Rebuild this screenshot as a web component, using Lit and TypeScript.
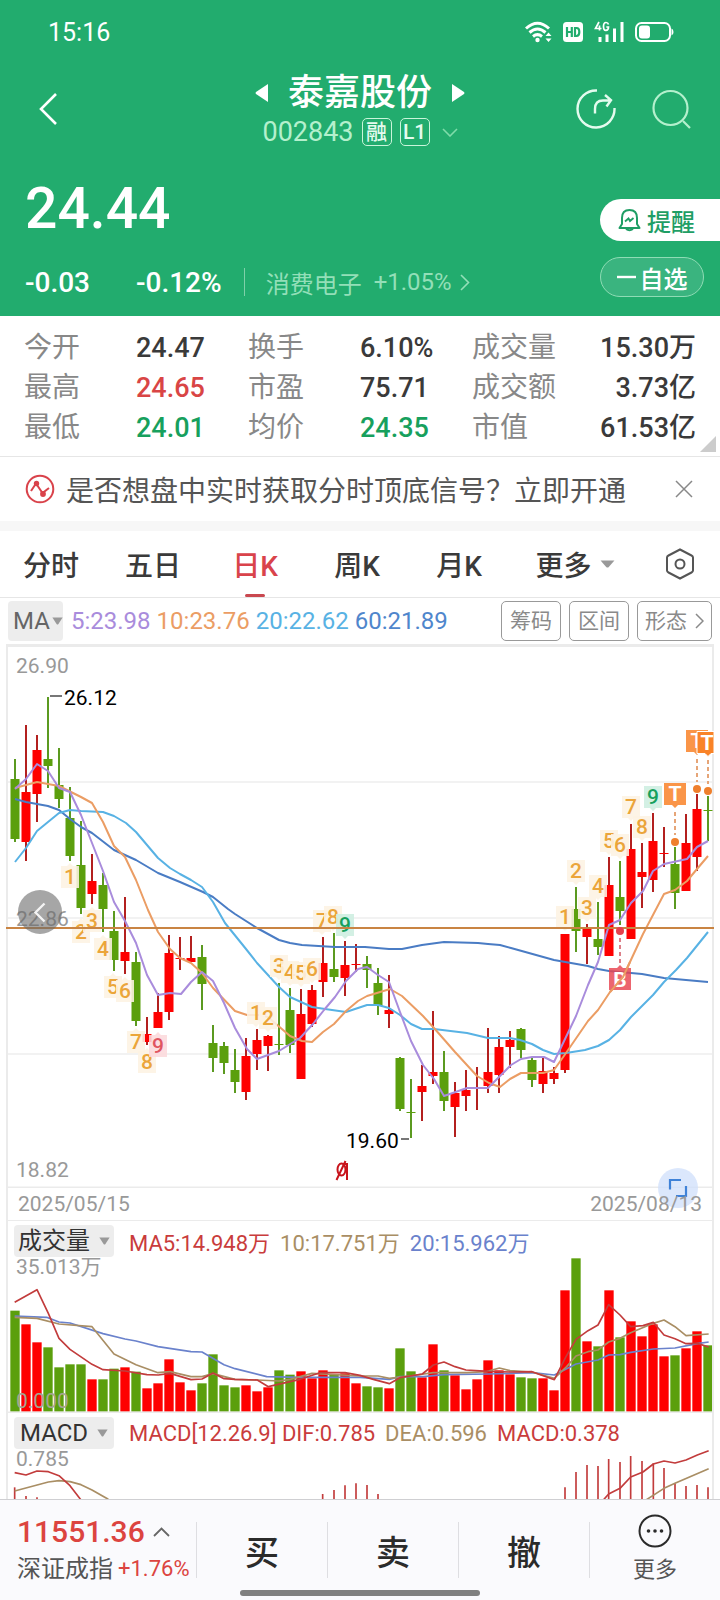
import { LitElement, html, css, svg } from "lit";
import { customElement } from "lit/decorators.js";

type Candle = [string, number, number, number, number];

// direction, wick top, wick bottom, body top, body bottom
const CANDLES: Candle[] = [
  ["g", 759, 842, 779, 839], ["r", 725, 861, 792, 842], ["r", 735, 822, 750, 794], ["g", 697, 788, 759, 766],
  ["g", 748, 808, 785, 799], ["g", 787, 861, 818, 856], ["g", 821, 914, 865, 908], ["r", 854, 904, 881, 894],
  ["g", 873, 932, 885, 909], ["g", 911, 971, 931, 960], ["r", 897, 974, 952, 961], ["g", 952, 1026, 962, 1021],
  ["r", 1017, 1045, 1034, 1042], ["r", 993, 1028, 1012, 1028], ["r", 935, 1020, 953, 1012], ["r", 937, 970, 958, 959],
  ["r", 936, 962, 958, 962], ["g", 945, 1010, 957, 984], ["g", 1025, 1072, 1043, 1058], ["g", 1042, 1074, 1046, 1063],
  ["g", 1049, 1093, 1070, 1082], ["r", 1038, 1100, 1056, 1092], ["r", 1029, 1070, 1040, 1054], ["r", 1035, 1071, 1036, 1046],
  ["g", 983, 1055, 1044, 1045], ["g", 988, 1053, 1010, 1045], ["r", 989, 1079, 1014, 1079], ["r", 985, 1027, 990, 1024],
  ["r", 937, 997, 963, 982], ["g", 933, 982, 969, 977], ["r", 941, 996, 965, 978], ["r", 944, 972, 964, 965],
  ["g", 956, 988, 964, 970], ["g", 968, 1015, 983, 1006], ["r", 975, 1028, 1010, 1014], ["g", 1057, 1111, 1058, 1109],
  ["g", 1079, 1138, 1112, 1113], ["r", 1065, 1121, 1086, 1092], ["r", 1011, 1084, 1072, 1076], ["g", 1051, 1111, 1072, 1101],
  ["r", 1082, 1137, 1093, 1107], ["r", 1070, 1111, 1090, 1096], ["r", 1067, 1110, 1088, 1089], ["r", 1028, 1093, 1072, 1086],
  ["r", 1036, 1093, 1047, 1075], ["r", 1031, 1068, 1040, 1047], ["g", 1028, 1058, 1029, 1050], ["g", 1058, 1087, 1060, 1080],
  ["r", 1057, 1093, 1071, 1084], ["r", 1067, 1084, 1073, 1079], ["r", 934, 1073, 934, 1070], ["g", 887, 952, 909, 931],
  ["r", 924, 964, 929, 937], ["g", 902, 955, 939, 947], ["r", 857, 956, 885, 956], ["g", 861, 925, 897, 911],
  ["r", 824, 939, 849, 939], ["r", 843, 908, 872, 877], ["r", 813, 892, 841, 880], ["r", 827, 867, 853, 854],
  ["g", 847, 909, 864, 893], ["r", 814, 891, 843, 891], ["r", 794, 871, 809, 857], ["g", 796, 841, 810, 811],
];

const MA5 = "15,789 26,779 37,764 48,771 59,788 70,792 81,815 92,843 103,871 114,902 125,921 136,943 147,975 158,995 170,993 181,994 191,982 202,972 213,981 224,1003 235,1028 247,1049 257,1059 279,1051 300,1038 313,1024 324,1010 335,997 346,981 358,969 367,967 378,975 389,982 400,1012 411,1041 423,1065 434,1079 444,1096 467,1088 488,1088 500,1076 511,1065 521,1059 532,1057 544,1057 554,1062 566,1037 576,1016 588,985 598,962 609,925 620,920 631,903 643,891 653,871 664,864 687,859 697,847 708,841";
const MA10 = "15,788 26,785 37,782 59,786 81,797 92,803 103,822 114,846 125,857 136,880 148,910 158,932 170,949 180,958 191,963 202,973 213,988 235,1011 247,1015 258,1015 268,1017 290,1036 302,1041 312,1042 323,1032 334,1024 346,1011 358,1001 367,996 390,989 402,996 423,1016 434,1028 455,1052 477,1076 489,1083 500,1087 510,1079 521,1073 543,1073 554,1070 566,1053 588,1021 598,1010 610,992 623,977 643,934 664,894 675,890 687,881 697,869 708,856";
const MA20 = "15,862 26,848 37,831 59,813 70,810 81,811 103,812 114,816 126,823 136,832 158,858 170,868 180,874 191,880 202,887 213,902 225,923 246,949 257,963 279,987 290,997 312,1007 325,1009 346,1012 358,1008 367,1005 378,1005 389,1008 400,1015 411,1024 422,1029 434,1029 467,1033 488,1038 510,1038 520,1040 532,1044 543,1050 554,1054 566,1053 585,1050 598,1046 609,1040 620,1030 631,1017 653,995 664,982 676,970 687,958 708,932";
const MA60 = "15,799 26,802 48,806 59,810 70,819 81,827 92,833 114,850 136,860 158,873 180,882 203,892 213,897 228,909 235,914 257,928 279,940 290,943 302,945 335,947 365,947 389,949 402,949 422,945 444,942 478,943 488,944 500,945 511,948 554,960 588,966 598,969 609,971 642,974 664,978 708,982";

// sequence digit, centre x, centre y, kind (u: box below a bar, d: box above a bar)
const COUNTS: [string, number, number, string][] = [
  ["1", 70, 877, "u"], ["2", 81, 932, "u"], ["3", 92, 921, "u"], ["4", 103, 949, "u"], ["5", 113, 987, "u"],
  ["6", 125, 991, "u"], ["7", 136, 1042, "u"], ["8", 147, 1062, "u"], ["9", 158, 1046, "red u"],
  ["1", 256, 1013, "d"], ["2", 268, 1018, "d"], ["3", 279, 966, "d"], ["4", 290, 972, "d"], ["5", 301, 973, "d"],
  ["6", 312, 969, "d"], ["7", 322, 921, "d"], ["8", 333, 917, "d"], ["9", 345, 925, "green d"],
  ["1", 565, 917, "d"], ["2", 576, 871, "d"], ["3", 587, 908, "d"], ["4", 598, 886, "d"], ["5", 609, 841, "d"],
  ["6", 620, 845, "d"], ["7", 631, 807, "d"], ["8", 642, 827, "d"], ["9", 653, 797, "green d"],
];

// top of each volume bar, on the panel's threefold scale with its base at 725
const VOLUMES = [
  422, 463, 517, 532, 592, 583, 583, 628, 628, 596, 592, 605, 655, 640, 568, 637, 661, 640, 553, 646, 652, 646,
  664, 652, 601, 614, 604, 625, 601, 613, 610, 640, 649, 652, 655, 535, 604, 622, 523, 601, 616, 658, 628, 571,
  601, 613, 622, 625, 625, 661, 361, 265, 514, 529, 361, 502, 454, 499, 463, 559, 556, 535, 484, 526,
];
const VOL5 = "44,397 111,359 145,430 177,505 210,538 276,583 309,599 375,603 441,614 475,615 510,610 573,629 606,627 639,609 672,626 705,628 772,630 805,650 900,628 960,608 1035,608 1080,616 1120,628 1168,641 1200,623 1267,612 1300,585 1332,576 1365,590 1398,600 1467,604 1532,606 1596,605 1663,629 1698,560 1728,508 1764,482 1794,465 1826,404 1860,435 1892,470 1929,467 1960,457 1992,495 2025,506 2058,521 2092,520 2126,531";
const VOL10 = "44,442 111,445 177,462 276,470 342,552 408,584 474,608 510,605 573,620 606,620 639,611 705,628 772,630 837,633 870,628 936,610 1080,618 1134,618 1168,625 1230,618 1300,608 1400,608 1460,605 1498,594 1530,602 1596,606 1663,625 1700,590 1728,558 1764,545 1794,540 1826,516 1860,505 1892,488 1960,460 1992,450 2025,470 2058,497 2126,492";
const VOL20 = "44,438 140,442 177,456 210,459 309,491 375,507 408,513 474,530 573,545 606,546 672,584 705,596 800,620 900,622 1080,622 1168,628 1200,620 1270,620 1332,614 1467,612 1596,608 1663,615 1728,582 1794,570 1826,555 1860,554 1892,547 1960,537 2025,534 2092,521 2126,516";

const MACD_BARS: [number, number][] = [
  [44, 952], [78, 978], [111, 982], [968, 972], [1002, 960], [1035, 946], [1068, 940], [1101, 945], [1134, 972],
  [1695, 952], [1728, 906], [1761, 885], [1794, 888], [1826, 867], [1860, 876], [1892, 858], [1926, 873],
  [1960, 880], [1992, 894], [2025, 940], [2058, 948], [2091, 945], [2124, 952],
];

const STATS: [string, string, string][] = [
  ["今开", "24.47", ""], ["换手", "6.10%", ""], ["成交量", "15.30万", ""],
  ["最高", "24.65", "up"], ["市盈", "75.71", ""], ["成交额", "3.73亿", ""],
  ["最低", "24.01", "down"], ["均价", "24.35", "down"], ["市值", "61.53亿", ""],
];

const candleX = (i: number) => 15 + i * 11;

@customElement("app-root")
export class AppRoot extends LitElement {
  static styles = css`
    :host {
      display: block;
      font-family: Roboto, "Noto Sans CJK SC", sans-serif;
      color: #333;
      background: #fff;
    }
    * { box-sizing: border-box; }
    button, a {
      font: inherit; color: inherit; background: none; border: 0; padding: 0; margin: 0; text-decoration: none;
      display: flex; align-items: center; cursor: pointer; white-space: nowrap;
    }
    svg { display: block; flex: none; }
    p, h1, dl, dd, dt { margin: 0; font-weight: 400; }
    .top { background: #22ac6e; color: #fff; }
    .status { display: flex; align-items: center; height: 64px; padding: 0 46px 0 48px; font-size: 25px; }
    .status time { flex: 1; }
    .status-icons { display: flex; align-items: center; gap: 11px; }
    .nav { display: grid; grid-template-columns: 1fr auto 1fr; padding: 8px 29px 0; align-items: center; }
    .back { padding-left: 9px; }
    .nav-right { display: flex; justify-content: flex-end; gap: 36px; }
    .title-box { display: flex; flex-direction: column; align-items: center; gap: 4px; }
    .title-row { display: flex; align-items: center; gap: 20px; height: 42px; }
    .title-row h1 { font-size: 36px; line-height: 42px; font-weight: 500; }
    .code-row { height: 28px; gap: 8px; font-size: 27px; line-height: 28px; color: #b4f0cd; }
    .tag {
      width: 30px; height: 28px; border: 1px solid #c9f5da; border-radius: 5px; color: #e4fbee;
      font-size: 21px; line-height: 26px; text-align: center; font-weight: 500;
    }
    .code-row svg { margin-left: 4px; }
    .quote { display: flex; justify-content: space-between; align-items: flex-end; padding: 31px 0 19px 25px; }
    .quote-main { display: flex; flex-direction: column; gap: 26px; }
    .price { font-size: 57px; line-height: 64px; font-weight: 500; }
    .change { display: flex; align-items: center; height: 30px; font-size: 28px; font-weight: 500; }
    .change-abs { width: 111px; }
    .sector {
      height: 28px; margin-left: 22px; padding-left: 21px; border-left: 1px solid #7fd0a9; color: #93dfb8;
      font-size: 24px; font-weight: 400; gap: 12px;
    }
    .sector svg { margin-left: -4px; }
    .quote-actions { display: flex; flex-direction: column; gap: 16px; width: 120px; }
    .remind {
      height: 42px; padding-left: 18px; gap: 6px; background: #fff; color: #1f9e65; border-radius: 21px 0 0 21px;
      font-size: 24px; font-weight: 500;
    }
    .watch {
      height: 40px; width: 104px; justify-content: center; gap: 4px; background: #3ab47f; border: 1px solid #8fdcb5;
      border-radius: 20px; font-size: 24px; font-weight: 500;
    }
    .stats {
      position: relative; border-bottom: 1px solid #e6e6e6; padding: 12px 24px 8px;
    }
    .stats dl { display: grid; grid-template-columns: 1fr 1fr 1fr 1fr 1fr 1fr; }
    .stat { display: grid; grid-column: span 2; grid-template-columns: 1fr 1fr; line-height: 40px; white-space: nowrap; }
    .stat dt { font-size: 28px; color: #888; }
    .stat dd { font-size: 27px; color: #3a3a3a; font-weight: 500; }
    .stat:nth-child(3n) dd { text-align: right; }
    .stat dd.up { color: #d94545; }
    .stat dd.down { color: #17a05d; }
    .corner { position: absolute; right: 4px; bottom: 4px; }
    .banner { display: flex; align-items: center; height: 64px; padding: 0 27px 0 25px; }
    .banner a { flex: 1; gap: 11px; font-size: 28px; color: #555; }
    .band { height: 10px; background: #f7f7f7; }
    .tabs {
      display: grid; grid-template-columns: repeat(5, 51fr) 65fr 40fr; height: 67px; border-bottom: 1px solid #e6e6e6;
      font-size: 28px; color: #3a3a3a;
    }
    .tabs button { justify-content: center; position: relative; gap: 8px; font-weight: 500; }
    .tabs .current { color: #d9434b; }
    .tabs .current::after {
      content: ""; position: absolute; left: calc(50% - 10px); bottom: 0; width: 20px; height: 3px;
      border-radius: 2px; background: #c9484f;
    }
    .ma-row { display: flex; align-items: center; height: 46px; padding: 0 8px; }
    .picker { background: #ededed; border-radius: 4px; color: #333; }
    .picker-ma { height: 40px; width: 55px; padding-left: 5px; font-size: 24px; color: #666; gap: 2px; }
    .ma-values { flex: 1; display: flex; gap: 6px; padding-left: 8px; font-size: 24px; white-space: nowrap; }
    .c-ma5 { color: #a98cdc; }
    .c-ma10 { color: #eb9d64; }
    .c-ma20 { color: #58b2e4; }
    .c-ma60 { color: #4f86cc; }
    .tools { display: flex; gap: 8px; }
    .tools button {
      height: 40px; min-width: 60px; justify-content: center; gap: 8px; padding: 0 7px; border: 1px solid #999;
      border-radius: 5px; color: #8a8a8a; font-size: 21px; line-height: 30px;
    }
    .charts { position: relative; }
    .charts svg.plot { width: 100%; height: auto; }
    .plot text { font-size: 21px; }
    .axis { fill: #999; }
    .frame-line { stroke: #ebebeb; fill: none; }
    .grid-line { stroke: #f2f2f2; stroke-width: 2; }
    .r { fill: #fe0000; }
    .g { fill: #5b9f0d; }
    .wick-r { fill: #b3201f; }
    .wick-g { fill: #5b9a20; }
    .line { fill: none; stroke-width: 2; stroke-linejoin: round; }
    .line3 { fill: none; stroke-width: 5; stroke-linejoin: round; }
    .s-ma5 { stroke: #a98cdc; }
    .s-ma10 { stroke: #eb9d64; }
    .s-ma20 { stroke: #58b2e4; }
    .s-ma60 { stroke: #4a7cc4; }
    .s-red { stroke: #c23c3c; }
    .s-tan { stroke: #a98e64; }
    .s-blue { stroke: #6a82cc; }
    .count-box { fill: #fdf2e3; fill-opacity: 0.88; }
    .count-text { fill: #eba53a; text-anchor: middle; font-weight: 500; }
    .red .count-box { fill: #fcd9dc; }
    .red .count-text { fill: #e05560; }
    .green .count-box { fill: #cdeee0; }
    .green .count-text { fill: #17a05d; }
    .flag-text { fill: #fff; text-anchor: middle; font-weight: 700; }
    .dates {
      display: flex; align-items: center; justify-content: space-between; height: 33px; margin: 0 6px; padding: 0 10px;
      border: solid #ebebeb; border-width: 0 2px 1px; font-size: 21px; color: #999;
    }
    .dates time { position: relative; }
    .prev { position: absolute; left: 18px; top: 246px; width: 44px; height: 44px; }
    .expand { position: absolute; right: 22px; bottom: 13px; width: 40px; height: 40px; }
    .indicator { position: relative; }
    .indicator::before {
      content: ""; position: absolute; inset: 0 6px; border: solid #ebebeb; border-width: 0 2px; pointer-events: none;
    }
    .indicator svg.plot { width: 100%; height: auto; }
    .legend { display: flex; align-items: center; gap: 10px; height: 36px; padding: 4px 14px 0; font-size: 22px; white-space: nowrap; }
    .legend button { width: 100px; height: 32px; margin-right: 5px; justify-content: center; gap: 9px; font-size: 24px; line-height: 30px; }
    .t-red { color: #c93c3c; }
    .t-tan { color: #a98e64; }
    .t-blue { color: #6a82cc; }
    .label-top, .label-base { position: absolute; left: 16px; font-size: 21px; line-height: 24px; color: #999; }
    .label-top { top: 34px; }
    .label-base { bottom: 0; color: #a5a592; }
    .bottom { background: #fafafd; border-top: 1px solid #cfcfd2; padding: 10px 0 5px; }
    .bar { display: grid; grid-template-columns: 196fr 131fr 131fr 131fr 131fr; align-items: center; }
    .bar > * { border-left: 1px solid #dedee2; height: 56px; justify-content: center; }
    .bar > .index { border-left: 0; height: 80px; padding-left: 17px; flex-direction: column; align-items: flex-start; }
    .index-value { display: flex; align-items: center; gap: 8px; font-size: 30px; line-height: 38px; font-weight: 500; color: #dc4440; }
    .index-name { display: flex; align-items: center; gap: 5px; font-size: 24px; line-height: 36px; color: #555; }
    .index-name b { font-size: 22px; font-weight: 400; color: #dc4440; }
    .trade { font-size: 34px; font-weight: 500; color: #2b2b2b; }
    .more { flex-direction: column; gap: 6px; font-size: 22px; line-height: 32px; color: #555; }
    .home { width: 240px; height: 6px; margin: 0 auto; border-radius: 3px; background: #808080; }
  `;

  private caret(size: number) {
    return html`<svg width=${size} height="8" viewBox="0 0 14 9" preserveAspectRatio="none" aria-hidden="true"><path d="M0.5 0.5h13l-5.3 7.3q-1.2 1.2-2.4 0z" fill="#999" /></svg>`;
  }

  private renderHeader() {
    return html`
      <header class="top">
        <div class="status">
          <time>15:16</time>
          <div class="status-icons">
            <svg width="27" height="22" viewBox="0 0 27 22" fill="none" stroke="#fff" stroke-width="3">
              <path d="M1 7.5Q12.500-3 24 7.500M4.500 11.500Q12.500 4.500 20.500 11.500M8 15.500Q12.500 11.700 17 15.500" />
              <circle cx="12.500" cy="19" r="2.200" fill="#fff" stroke="none" />
              <path d="M20.500 15l3-3.500 3 3.500zM20.500 17.500l3 3.500 3-3.500z" fill="#fff" stroke="none" />
            </svg>
            <svg width="20" height="20" viewBox="0 0 20 20">
              <rect width="20" height="20" rx="3.500" fill="#fff" />
              <path d="M4 5v10M8.800 5v10M4 10h5M12 6v8h1.500q2.800 0 2.800-4t-2.800-4z" fill="none" stroke="#22ac6e" stroke-width="2.200" />
            </svg>
            <svg width="30" height="22" viewBox="0 0 30 22">
              <path d="M5 1L1.500 7.500h6M5.500 4.500v5M14.500 3.500Q14 1.500 12 1.500Q9.500 1.500 9.500 5.500T12 9.300Q14.500 9.300 14.500 6H12.300" fill="none" stroke="#fff" stroke-width="1.700" />
              <path d="M6 16v5M13 13.500v7.500M20.500 7.500v13.500M28 1v20" stroke="#fff" stroke-width="3" />
            </svg>
            <svg width="39" height="20" viewBox="0 0 39 20">
              <rect x="1" y="1" width="34" height="18" rx="5.500" fill="none" stroke="#fff" stroke-width="2" />
              <rect x="4" y="3.500" width="11" height="13" rx="3" fill="#fff" />
              <path d="M36.500 6.500q2 0.500 2 3.500t-2 3.500z" fill="#fff" />
            </svg>
          </div>
        </div>
        <nav class="nav">
          <button class="back" aria-label="返回">
            <svg width="20" height="34" viewBox="0 0 20 34"><path d="M18 2L3 17l15 15" fill="none" stroke="#fff" stroke-width="2.600" /></svg>
          </button>
          <div class="title-box">
            <div class="title-row">
              <button aria-label="上一个"><svg width="13" height="18" viewBox="0 0 13 18"><path d="M13 0v18L1 10q-1-1 0-2z" fill="#fff" /></svg></button>
              <h1>泰嘉股份</h1>
              <button aria-label="下一个"><svg width="13" height="18" viewBox="0 0 13 18"><path d="M0 0v18l12-8q1-1 0-2z" fill="#fff" /></svg></button>
            </div>
            <button class="code-row">
              <span>002843</span><span class="tag">融</span><span class="tag">L1</span>
              <svg width="16" height="9" viewBox="0 0 16 9"><path d="M1 1l7 7 7-7" fill="none" stroke="#7fdcaa" stroke-width="1.600" /></svg>
            </button>
          </div>
          <div class="nav-right">
            <button aria-label="分享">
              <svg width="40" height="40" viewBox="0 0 40 40" fill="none" stroke="#e4fbee" stroke-width="2.400">
                <path d="M21 1.500A18.500 18.500 0 1 0 38.500 19" />
                <path d="M19 24.500V20Q19 11.500 27 11.500H34.500M29 6l6 5.200-4.500 6.300" />
              </svg>
            </button>
            <button aria-label="搜索">
              <svg width="39" height="40" viewBox="0 0 39 40" fill="none" stroke="#b4f0cd" stroke-width="2.200">
                <circle cx="18.500" cy="19" r="17" /><path d="M31 32l7 7" />
              </svg>
            </button>
          </div>
        </nav>
        <section class="quote">
          <div class="quote-main">
            <div class="price">24.44</div>
            <div class="change">
              <span class="change-abs">-0.03</span><span>-0.12%</span>
              <a class="sector" href="#sector"><span>消费电子</span><span>+1.05%</span>
                <svg width="10" height="17" viewBox="0 0 10 17"><path d="M1 1l7.500 7.500L1 16" fill="none" stroke="#93dfb8" stroke-width="1.600" /></svg>
              </a>
            </div>
          </div>
          <div class="quote-actions">
            <button class="remind">
              <svg width="23" height="24" viewBox="0 0 23 24" fill="none" stroke="#1f9e65" stroke-width="2">
                <path d="M4 16V10q0-8 7.500-8T19 10v6l2.500 4H1.500zM8 21q3.500 2.500 7 0" stroke-linejoin="round" />
                <path d="M7 13.500l3.500-3 1.500 2.500 3.500-3" stroke-width="1.800" />
              </svg>提醒
            </button>
            <button class="watch">
              <svg width="19" height="4" viewBox="0 0 19 4"><path d="M0 2h19" stroke="#fff" stroke-width="2.400" /></svg>自选
            </button>
          </div>
        </section>
      </header>`;
  }

  private renderCandles() {
    return CANDLES.map(([kind, wickTop, wickBottom, top, bottom], i) => svg`
      <rect class="wick-${kind}" x=${candleX(i) - 1} y=${wickTop} width="2" height=${wickBottom - wickTop} />
      <rect class=${kind} x=${candleX(i) - 4.5} y=${top} width="9" height=${bottom - top} />`);
  }

  private renderCounts() {
    return COUNTS.map(([digit, x, y, kind]) => svg`
      <g class=${kind}>
        <path class="count-box" d=${kind.includes("u")
          ? `M${x - 9} ${y - 11}h6l3-3 3 3h6v22h-18z`
          : `M${x - 9} ${y - 11}h18v22h-6l-3 3-3-3h-6z`} />
        <text class="count-text" x=${x} y=${y + 7}>${digit}</text>
      </g>`);
  }

  private renderFlag(x: number, y: number, dotY: number) {
    return svg`
      <path d=${`M${x - 11} ${y}h22v22h-8l-3 3-3-3h-8z`} fill="#f98328" fill-opacity="0.85" />
      <text class="flag-text" x=${x} y=${y + 18}>T</text>
      <path d=${`M${x} ${y + 29}V${dotY - 7}`} stroke="#e6a577" stroke-width="2" stroke-dasharray="4 3" />
      <circle cx=${x} cy=${dotY} r="4" fill="#ef7f2c" />`;
  }

  private renderMainChart() {
    return html`
      <svg class="plot" viewBox="0 644 720 544" role="img" aria-label="日K线图">
        <path class="frame-line" d="M7 644V1188M713 644V1188M6 1187.500H714" stroke-width="2" />
        <path class="frame-line" d="M6 645.500H714" stroke-width="3" />
        <path class="grid-line" d="M8 782H712M8 918H712M8 1054H712" />
        <text class="axis" x="16" y="673">26.90</text>
        <text class="axis" x="16" y="926">22.86</text>
        <text class="axis" x="16" y="1177">18.82</text>
        ${this.renderCandles()}
        <polyline class="line s-ma60" points=${MA60} />
        <polyline class="line s-ma20" points=${MA20} />
        <polyline class="line s-ma10" points=${MA10} />
        <polyline class="line s-ma5" points=${MA5} />
        ${this.renderCounts()}
        <path d="M50 696h12M401 1139h8" stroke="#777" stroke-width="2" />
        <text x="64" y="705">26.12</text>
        <text x="346" y="1148">19.60</text>
        <path d="M6 928H714" stroke="#c98443" stroke-width="2" />
        <circle cx="620" cy="931" r="4" fill="#e5404c" />
        <path d="M620 938V964" stroke="#dc7f88" stroke-width="2" stroke-dasharray="4 3" />
        <path d="M609 968h8l3-3 3 3h8v22h-22z" fill="#e8434f" fill-opacity="0.82" />
        <text class="flag-text" x="620" y="987">B</text>
        <path d="M610 992L623 977L630 962" class="line s-ma10" />
        ${this.renderFlag(675, 783, 842)}
        ${this.renderFlag(697, 730, 789)}
        <path d="M697 731.500h17v22h-3l-3 3-3-3h-8z" fill="#f98328" stroke="#fff" />
        <text class="flag-text" x="707" y="750">T</text>
        <path d="M708 760V784" stroke="#e6a577" stroke-width="2" stroke-dasharray="4 3" />
        <circle cx="708" cy="791" r="4" fill="#ef7f2c" />
        <g fill="none" stroke="#c8141c" stroke-width="2">
          <ellipse cx="341.500" cy="1169.500" rx="4" ry="6" /><path d="M336.500 1180L345.500 1161M343 1164h4v16" />
        </g>
      </svg>`;
  }

  private renderVolume() {
    return html`
      <section class="indicator">
        <div class="legend">
          <button class="picker">成交量 ${this.caret(11)}</button>
          <span class="t-red">MA5:14.948万</span><span class="t-tan">10:17.751万</span><span class="t-blue">20:15.962万</span>
        </div>
        <svg class="plot" viewBox="0 261 2160 468" role="img" aria-label="成交量">
          ${VOLUMES.map((top, i) => svg`<rect class=${CANDLES[i][0]} x=${candleX(i) * 3 - 14} y=${top} width="28" height=${725 - top} />`)}
          <polyline class="line3 s-blue" points=${VOL20} />
          <polyline class="line3 s-tan" points=${VOL10} />
          <polyline class="line3 s-red" points=${VOL5} />
          <path class="frame-line" d="M18 727H2142" stroke-width="5" />
        </svg>
        <span class="label-top">35.013万</span>
        <span class="label-base">0.000</span>
      </section>`;
  }

  private renderMacd() {
    return html`
      <section class="indicator">
        <div class="legend">
          <button class="picker">MACD ${this.caret(11)}</button>
          <span class="t-red">MACD[12.26.9] DIF:0.785</span><span class="t-tan">DEA:0.596</span><span class="t-red">MACD:0.378</span>
        </div>
        <svg class="plot" viewBox="0 837 2160 150" role="img" aria-label="MACD">
          ${MACD_BARS.map(([x, y]) => svg`<path class="line3 s-red" d=${`M${x} ${y}V990`} />`)}
          <polyline class="line3 s-tan" points="44,963 145,936 177,932 210,935 243,944 276,960 325,988" />
          <polyline class="line3 s-tan" points="1938,990 1992,955 2025,940 2126,896" />
          <polyline class="line3 s-red" points="44,908 78,915 111,903 145,905 177,917 210,947 243,990" />
          <polyline class="line3 s-red" points="1810,990 1826,972 1860,955 1892,921 1929,906 1960,882 1992,873 2025,879 2058,870 2092,855 2126,842" />
        </svg>
        <span class="label-top">0.785</span>
      </section>`;
  }

  private renderBottom() {
    return html`
      <footer class="bottom">
        <div class="bar">
          <button class="index">
            <span class="index-value">11551.36
              <svg width="17" height="10" viewBox="0 0 17 10"><path d="M1 9l7.500-7.500L16 9" fill="none" stroke="#666" stroke-width="1.800" /></svg>
            </span>
            <span class="index-name">深证成指<b>+1.76%</b></span>
          </button>
          <button class="trade">买</button>
          <button class="trade">卖</button>
          <button class="trade">撤</button>
          <button class="more">
            <svg width="34" height="34" viewBox="0 0 34 34">
              <circle cx="17" cy="17" r="15.500" fill="none" stroke="#2b2b2b" stroke-width="2" />
              <g fill="#2b2b2b"><circle cx="10.500" cy="17" r="1.800" /><circle cx="17" cy="17" r="1.800" /><circle cx="23.500" cy="17" r="1.800" /></g>
            </svg>更多
          </button>
        </div>
        <div class="home"></div>
      </footer>`;
  }

  render() {
    return html`
      ${this.renderHeader()}
      <section class="stats">
        <dl>${STATS.map(([name, value, tone]) => html`<div class="stat"><dt>${name}</dt><dd class=${tone}>${value}</dd></div>`)}</dl>
        <svg class="corner" width="16" height="16" viewBox="0 0 16 16"><path d="M16 0v16H0z" fill="#ccc" /></svg>
      </section>
      <div class="banner">
        <a href="#open">
          <svg width="30" height="30" viewBox="0 0 30 30" fill="none" stroke="#d9434b" stroke-width="2">
            <circle cx="15" cy="15" r="13.300" />
            <path d="M6 17l5-7.500 6.500 9.500 6.500-5" />
            <circle cx="11.500" cy="9.500" r="2.700" fill="#d9434b" stroke="none" /><circle cx="18" cy="20" r="2.900" fill="#d9434b" stroke="none" />
          </svg>是否想盘中实时获取分时顶底信号？立即开通
        </a>
        <button aria-label="关闭"><svg width="18" height="18" viewBox="0 0 18 18"><path d="M1 1l16 16M17 1L1 17" stroke="#888" stroke-width="1.500" /></svg></button>
      </div>
      <div class="band"></div>
      <nav class="tabs">
        <button>分时</button><button>五日</button><button class="current">日K</button><button>周K</button><button>月K</button>
        <button>更多 ${this.caret(15)}</button>
        <button aria-label="设置">
          <svg width="30" height="32" viewBox="0 0 30 32" fill="none" stroke="#555" stroke-width="2">
            <path d="M15 1.500l11.500 6q1.500 0.800 1.500 2v13q0 1.200-1.500 2l-11.500 6-11.500-6q-1.500-0.800-1.500-2v-13q0-1.200 1.500-2z" /><circle cx="15" cy="16" r="4.500" />
          </svg>
        </button>
      </nav>
      <div class="ma-row">
        <button class="picker picker-ma">MA${this.caret(11)}</button>
        <div class="ma-values">
          <span class="c-ma5">5:23.98</span><span class="c-ma10">10:23.76</span><span class="c-ma20">20:22.62</span><span class="c-ma60">60:21.89</span>
        </div>
        <div class="tools">
          <button>筹码</button><button>区间</button>
          <button>形态<svg width="9" height="16" viewBox="0 0 9 16"><path d="M1 1l7 7-7 7" fill="none" stroke="#8a8a8a" stroke-width="1.500" /></svg></button>
        </div>
      </div>
      <section class="charts">
        ${this.renderMainChart()}
        <button class="prev" aria-label="更早">
          <svg width="44" height="44" viewBox="0 0 44 44"><circle cx="22" cy="22" r="22" fill="#6b6b6b" fill-opacity="0.6" /><path d="M26.500 13.500l-9 9 9 9" fill="none" stroke="#f4f4f4" stroke-width="2.400" /></svg>
        </button>
        <button class="expand" aria-label="全屏">
          <svg width="40" height="40" viewBox="0 0 40 40"><circle cx="20" cy="20" r="20" fill="#cfdffb" fill-opacity="0.75" /><path d="M12 21.500V12h11M18 28h10V18" fill="none" stroke="#3f82d8" stroke-width="2.200" /></svg>
        </button>
        <div class="dates"><time>2025/05/15</time><time>2025/08/13</time></div>
      </section>
      ${this.renderVolume()}
      ${this.renderMacd()}
      ${this.renderBottom()}`;
  }
}
